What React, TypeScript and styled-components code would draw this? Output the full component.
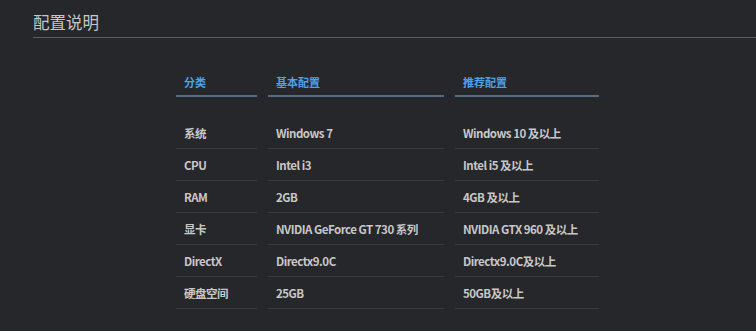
import React from "react";
import styled, { createGlobalStyle } from "styled-components";

const Global = createGlobalStyle`
  html, body { margin: 0; padding: 0; background: #26272b; }
  body { font-family: "Noto Sans CJK SC", "Noto Sans", sans-serif; }
`;

const Page = styled.div`
  width: 756px;
  height: 331px;
  background: #26272b;
  overflow: hidden;
  padding-left: 33px;
  padding-top: 9px;
  box-sizing: border-box;
`;

const Title = styled.h2`
  margin: 0;
  font-size: 16.5px;
  font-weight: 400;
  line-height: 26px;
  color: #c6c6c6;
  padding-bottom: 2px;
  border-bottom: 1px solid #5c5e62;
`;

const Table = styled.div`
  display: grid;
  grid-template-columns: 81px 176px 144px;
  column-gap: 11px;
  margin-left: 143px;
  margin-top: 30px;
`;

const HeadCell = styled.div`
  height: 27px;
  padding-left: 8px;
  font-size: 11px;
  font-weight: 700;
  line-height: 28px;
  color: #4da2e8;
  border-bottom: 2px solid #566c82;
  margin-bottom: 20px;
`;

const Cell = styled.div`
  height: 31px;
  padding-left: 8px;
  font-size: 11.5px;
  font-weight: 700;
  letter-spacing: -0.5px;
  line-height: 33px;
  color: #c8c8c8;
  border-bottom: 1px solid #36393e;
  white-space: nowrap;
`;

const rows: [string, string, string][] = [
  ["系统", "Windows 7", "Windows 10 及以上"],
  ["CPU", "Intel i3", "Intel i5 及以上"],
  ["RAM", "2GB", "4GB 及以上"],
  ["显卡", "NVIDIA GeForce GT 730 系列", "NVIDIA GTX 960 及以上"],
  ["DirectX", "Directx9.0C", "Directx9.0C及以上"],
  ["硬盘空间", "25GB", "50GB及以上"],
];

export default function App() {
  return (
    <Page>
      <Global />
      <Title>配置说明</Title>
      <Table>
        <HeadCell>分类</HeadCell>
        <HeadCell>基本配置</HeadCell>
        <HeadCell>推荐配置</HeadCell>
        {rows.map((r) =>
          r.map((c, i) => <Cell key={r[0] + i}>{c}</Cell>)
        )}
      </Table>
    </Page>
  );
}
